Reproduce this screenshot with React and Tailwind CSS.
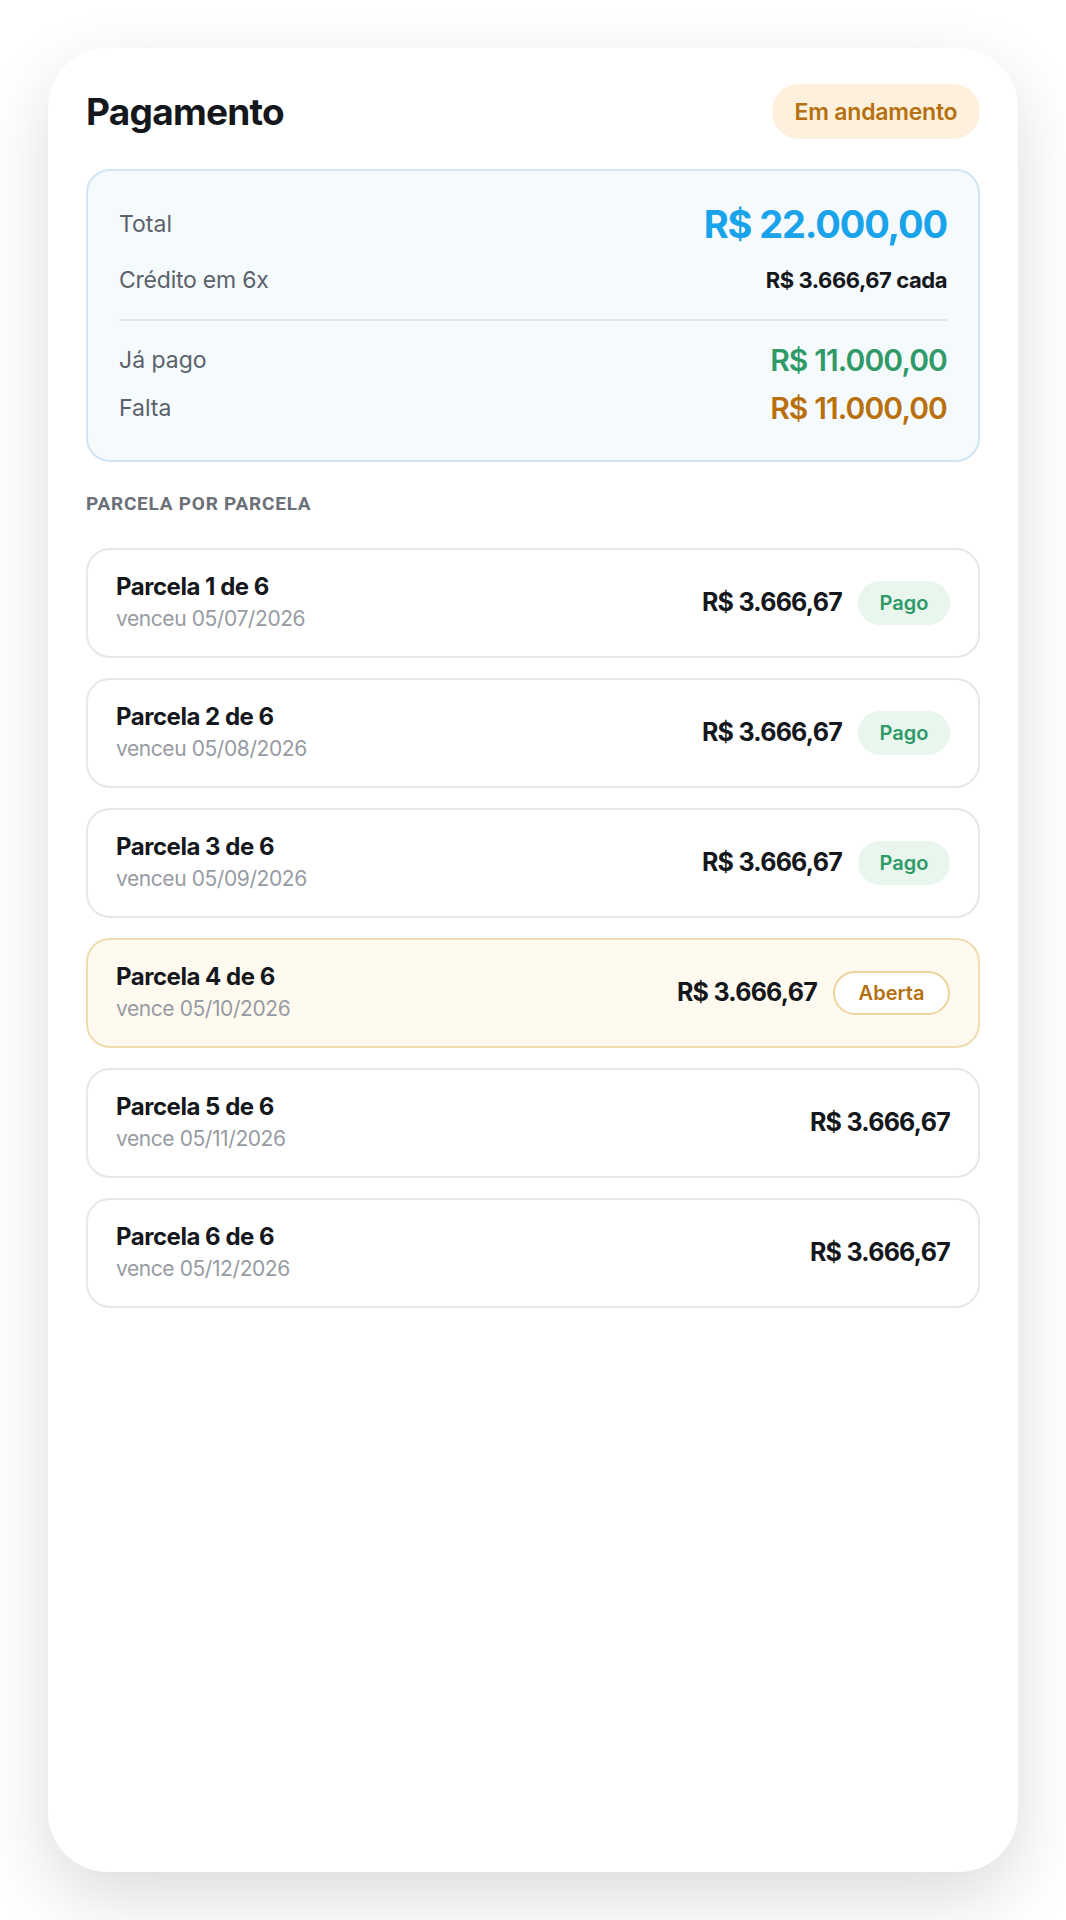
import React from "react";

const installments = [
  { n: 1, label: "venceu 05/07/2026", status: "pago" },
  { n: 2, label: "venceu 05/08/2026", status: "pago" },
  { n: 3, label: "venceu 05/09/2026", status: "pago" },
  { n: 4, label: "vence 05/10/2026", status: "aberta" },
  { n: 5, label: "vence 05/11/2026", status: "" },
  { n: 6, label: "vence 05/12/2026", status: "" },
];

const Installment = ({ n, label, status }) => {
  const open = status === "aberta";
  return (
    <div
      className={
        open
          ? "h-[110px] flex items-center justify-between rounded-[24px] border-2 border-[#efdcaf] bg-[#fffaef] px-[28px]"
          : "h-[110px] flex items-center justify-between rounded-[24px] border-2 border-[#e6e7ea] bg-white px-[28px]"
      }
    >
      <div className="flex flex-col gap-[4px]">
        <div className="text-[24px] leading-[28px] font-bold tracking-[-0.02em] text-[#14171c]">
          Parcela {n} de 6
        </div>
        <div className="text-[21px] leading-[28px] tracking-[-0.02em] text-[#979ba3]">
          {label}
        </div>
      </div>
      <div className="flex items-center gap-[16px]">
        <div className="text-[25px] font-bold tracking-[-0.03em] text-[#14171c]">
          R$ 3.666,67
        </div>
        {status === "pago" && (
          <div className="h-[44px] w-[92px] flex items-center justify-center rounded-full bg-[#e8f6ee] text-[20px] font-semibold text-[#2f9a68]">
            Pago
          </div>
        )}
        {open && (
          <div className="h-[44px] w-[117px] flex items-center justify-center rounded-full border-2 border-[#ecd49c] bg-white text-[20px] font-semibold text-[#b5700f]">
            Aberta
          </div>
        )}
      </div>
    </div>
  );
};

const App = () => {
  return (
    <div className="min-h-[1920px] bg-white pt-[48px] px-[48px] font-['Inter',sans-serif]">
      <div className="h-[1824px] rounded-[60px] bg-white shadow-[0_26px_70px_rgba(0,0,0,0.14)] px-[38px] pt-[36px]">
        {/* header */}
        <div className="flex items-center justify-between">
          <h1 className="text-[37px] font-bold tracking-[-0.02em] text-[#14171c]">
            Pagamento
          </h1>
          <div className="h-[55px] w-[208px] flex items-center justify-center rounded-full bg-[#fdf0dd] text-[23px] font-semibold tracking-[-0.01em] text-[#b5700f]">
            Em andamento
          </div>
        </div>

        {/* summary */}
        <div className="mt-[29px] rounded-[24px] border-2 border-[#cfe5f3] bg-[#f5fafd] px-[31px] pt-[30px] pb-[33px]">
          <div className="h-[48px] flex items-center justify-between">
            <span className="text-[23px] text-[#5b616b]">Total</span>
            <span className="text-[38px] font-bold tracking-[-0.03em] text-[#18a3ea]">
              R$ 22.000,00
            </span>
          </div>
          <div className="mt-[17px] h-[30px] flex items-center justify-between">
            <span className="text-[23px] tracking-[-0.01em] text-[#5b616b]">Crédito em 6x</span>
            <span className="text-[22px] font-bold tracking-[-0.02em] text-[#14171c]">
              R$ 3.666,67 cada
            </span>
          </div>
          <div className="mt-[23px] border-t-2 border-[#dfe5ea]" />
          <div className="mt-[22px] h-[36px] flex items-center justify-between">
            <span className="text-[23px] text-[#5b616b]">Já pago</span>
            <span className="text-[30px] font-semibold tracking-[-0.03em] text-[#2f9a68]">
              R$ 11.000,00
            </span>
          </div>
          <div className="mt-[12px] h-[36px] flex items-center justify-between">
            <span className="text-[23px] text-[#5b616b]">Falta</span>
            <span className="text-[30px] font-semibold tracking-[-0.03em] text-[#b86f0c]">
              R$ 11.000,00
            </span>
          </div>
        </div>

        <div className="mt-[31px] h-[24px] flex items-center font-['Roboto',sans-serif] text-[19px] font-bold uppercase tracking-[0.04em] text-[#6b7079]">
          Parcela por parcela
        </div>

        <div className="mt-[31px] flex flex-col gap-5">
          {installments.map((item) => (
            <Installment key={item.n} {...item} />
          ))}
        </div>
      </div>
    </div>
  );
};

export default App;
